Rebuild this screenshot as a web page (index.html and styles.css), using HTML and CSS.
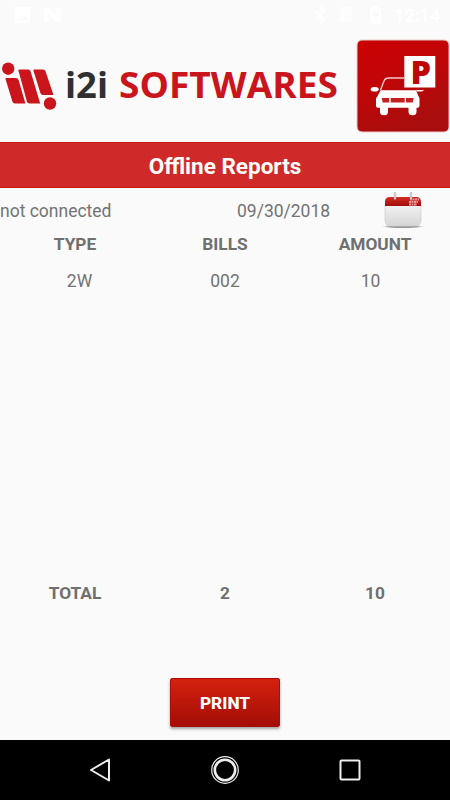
FILE: index.html
```html
<!DOCTYPE html>
<html lang="en">
<head>
  <meta charset="UTF-8">
  <title>Offline Reports</title>
  <link rel="stylesheet" href="styles.css">
</head>
<body>

<div class="screen">
  <div class="status-bar">
    <svg class="status-left" width="50" height="16" viewBox="0 0 50 16">
      <path fill-rule="evenodd" d="M1 0h13q1 0 1 1v14q0 1-1 1H1q-1 0-1-1V1q0-1 1-1zM2 13h11L10 8l-3 4-2-2z"/>
      <path d="M29 2l5-1 7 8V1l5 1v12l-5 1-7-8v8l-5-1z"/>
    </svg>
    <div class="status-right">
      <svg width="68" height="18" viewBox="0 0 68 18">
        <path class="line" d="M1 5l9 8-4 4V1l4 4-9 8"/>
        <path class="dim" d="M28 1h9v15H25V4z"/>
        <path fill-rule="evenodd" d="M58 0h5v2h3v16H55V2h3zM61 4l-4 6h3v5l4-7h-3z"/>
      </svg>
      <span class="clock">12:14</span>
    </div>
  </div>

  <div class="header">
    <svg class="logo" width="350" height="60" viewBox="0 0 350 60">
      <g fill="#c9151b">
        <circle cx="8.2" cy="13.7" r="6.200"/>
        <circle cx="50" cy="48.500" r="6.200"/>
        <path d="M6 23h10q2 0 2.600 2l6.800 23.500H15q-2 0-2.600-2L5.500 24q0-1 .5-1z"/>
        <path d="M19 14.500h9q2 0 2.600 2l9.600 32H29.500q-2 0-2.600-2l-8.500-31q0-1 .6-1z"/>
        <path d="M34 14.500h9q2 0 2.600 2L53.500 40H43q-2 0-2.600-2l-7-22.500q0-1 .6-1z"/>
      </g>
      <text class="logo-dark" x="65" y="43" textLength="43" lengthAdjust="spacingAndGlyphs">i2i</text>
      <text class="logo-red" x="119" y="43" textLength="219" lengthAdjust="spacingAndGlyphs">SOFTWARES</text>
    </svg>
    <svg class="parking" width="94" height="94" viewBox="0 0 94 94">
      <defs>
        <linearGradient id="tile" x1="0" y1="0" x2="0.4" y2="1">
          <stop offset="0" stop-color="#cb0203"/>
          <stop offset="0.5" stop-color="#c00607"/>
          <stop offset="1" stop-color="#a90d0d"/>
        </linearGradient>
      </defs>
      <rect x="1" y="1" width="92" height="92" rx="5" fill="url(#tile)" stroke="#eccaca"/>
      <path d="M24.500 51l3.500-9q1-3 5-3h15" fill="none" stroke="#f3caca" stroke-width="1.400"/>
      <g fill="#fff">
        <rect x="48.300" y="17" width="31" height="31.500"/>
        <ellipse cx="18.700" cy="50.300" rx="4" ry="2.300"/>
        <path d="M60 51h8.500l-3 1.500h-4.500z"/>
        <path d="M24.500 51.300h35.500l2.500 6q1 1 1 3v6.500q0 2-2 2h-1v4q0 3.500-4 3.500t-4-3.500v-4H32v4q0 3.500-4 3.500t-4-3.500v-4h-2q-2 0-2-2v-6.500q0-2 1.500-3z"/>
      </g>
      <path d="M25.700 59h7.500v4.500h-6.500zM34.700 59h14v4.500h-14zM50 59h7.700l-1 4.500H50z" fill="#c52020"/>
      <text class="parking-letter" x="54.500" y="45" textLength="20.500" lengthAdjust="spacingAndGlyphs">P</text>
    </svg>
  </div>

  <h1 class="title">Offline Reports</h1>

  <div class="info">
    <span class="connection">not connected</span>
    <span class="date">09/30/2018</span>
    <svg class="calendar" width="42" height="38" viewBox="0 0 42 38">
      <defs>
        <linearGradient id="calBody" x1="0" y1="0" x2="0" y2="1">
          <stop offset="0" stop-color="#f2f2f2"/>
          <stop offset="1" stop-color="#d5d5d5"/>
        </linearGradient>
        <linearGradient id="calTop" x1="0" y1="0" x2="0" y2="1">
          <stop offset="0" stop-color="#d62a25"/>
          <stop offset="1" stop-color="#a00e0b"/>
        </linearGradient>
        <radialGradient id="calShadow">
          <stop offset="0.600" stop-color="#999"/>
          <stop offset="1" stop-color="#999" stop-opacity="0"/>
        </radialGradient>
      </defs>
      <ellipse cx="21" cy="34.500" rx="21" ry="2" fill="url(#calShadow)"/>
      <path d="M3 13h36v15q0 6-6 6H9q-6 0-6-6z" fill="url(#calBody)" stroke="#ccc" stroke-width="0.700"/>
      <path d="M3 14v-4q0-5 5-5h26q5 0 5 5v4z" fill="url(#calTop)"/>
      <path d="M28 7.500h9M27 10h9M27 12.500h8" fill="none" stroke="#e69a96" stroke-width="1.800" stroke-dasharray="2 0.500"/>
      <path d="M13 1.500v5M29 1.500v5" stroke="#aaa" stroke-width="2.400" stroke-linecap="round"/>
      <path d="M13 1.500v5M29 1.500v5" stroke="#eee" stroke-width="1" stroke-linecap="round"/>
    </svg>
  </div>

  <div class="row head">
    <span>TYPE</span>
    <span>BILLS</span>
    <span>AMOUNT</span>
  </div>
  <div class="list">
    <div class="row item">
      <span>2W</span>
      <span>002</span>
      <span>10</span>
    </div>
  </div>
  <div class="row total">
    <span>TOTAL</span>
    <span>2</span>
    <span>10</span>
  </div>

  <div class="actions">
    <button class="print">PRINT</button>
  </div>

  <div class="nav-bar">
    <svg width="30" height="30" viewBox="0 0 30 30">
      <path d="M6 15L24 4.500v21z" stroke-width="2" stroke-linejoin="round"/>
    </svg>
    <svg width="30" height="30" viewBox="0 0 30 30">
      <circle cx="15" cy="15" r="13.300" stroke-width="1.200"/>
      <circle cx="15" cy="15" r="10.200" stroke-width="2.600"/>
    </svg>
    <svg width="30" height="30" viewBox="0 0 30 30">
      <rect x="5.500" y="5.500" width="19" height="19" rx="1" stroke-width="2"/>
    </svg>
  </div>
</div>

</body>
</html>
```
FILE: styles.css
```css
* {
  box-sizing: border-box;
}

body {
  margin: 0;
  background-color: #fafafa;
  font-family: Roboto, sans-serif;
  font-size: 17.5px;
  color: #737373;
}

.screen {
  display: flex;
  flex-direction: column;
  height: 800px;
}

.status-bar {
  display: flex;
  justify-content: space-between;
  height: 32px;
  padding: 6px 10px 0 15px;
  fill: #fff;
}

.status-left {
  margin-top: 1px;
}

.status-right {
  display: flex;
  gap: 11px;
}

.status-right .line {
  fill: none;
  stroke: #fff;
  stroke-width: 1.5;
}

.status-right .dim {
  fill: #fdfdfd;
}

.clock {
  font-size: 18px;
  font-weight: 500;
  line-height: 19px;
  color: #fff;
}

.header {
  display: flex;
  justify-content: space-between;
  height: 110px;
  padding-top: 7px;
}

.logo {
  margin-top: 16px;
}

.logo text {
  font-family: "Open Sans", sans-serif;
  font-size: 35px;
  font-weight: 700;
}

.logo .logo-dark {
  fill: #2e3032;
}

.logo .logo-red {
  fill: #c9151b;
}

.parking-letter {
  font-family: "Open Sans", sans-serif;
  font-size: 32px;
  font-weight: 800;
  fill: #c00707;
}

.title {
  height: 46px;
  margin: 0;
  border-top: 1px solid #cb1512;
  border-bottom: 1px solid #cb1512;
  background-color: #cf2a29;
  color: #fff;
  font-size: 22.5px;
  font-weight: 700;
  line-height: 47px;
  text-align: center;
}

.info {
  display: flex;
  height: 42px;
  line-height: 46px;
}

.connection {
  width: 237px;
}

.date {
  width: 145px;
}

.calendar {
  margin-top: 4px;
}

.row {
  display: grid;
  grid-template-columns: repeat(3, 1fr);
  text-align: center;
}

.head,
.total {
  font-size: 17.3px;
  font-weight: 700;
  color: #6f6f6f;
}

.head {
  height: 28px;
  line-height: 28px;
}

.list {
  height: 320px;
}

.item {
  padding: 0 4px;
  grid-template-columns: 151px 140px 151px;
  line-height: 46px;
}

.total {
  height: 30px;
  line-height: 30px;
}

.actions {
  flex: 1;
  padding-top: 70px;
  text-align: center;
}

.print {
  width: 110px;
  height: 49px;
  padding: 0;
  border: 1px solid #a90d06;
  border-radius: 2px;
  background: linear-gradient(#d4210f, #a30d06);
  box-shadow: 0 2px 3px rgba(0, 0, 0, 0.35);
  color: #fff;
  font-family: Roboto, sans-serif;
  font-size: 17.3px;
  font-weight: 800;
}

.nav-bar {
  display: flex;
  justify-content: space-between;
  align-items: center;
  height: 60px;
  padding: 0 85px;
  background-color: #000;
}

.nav-bar svg {
  fill: none;
  stroke: #eee;
}
```
